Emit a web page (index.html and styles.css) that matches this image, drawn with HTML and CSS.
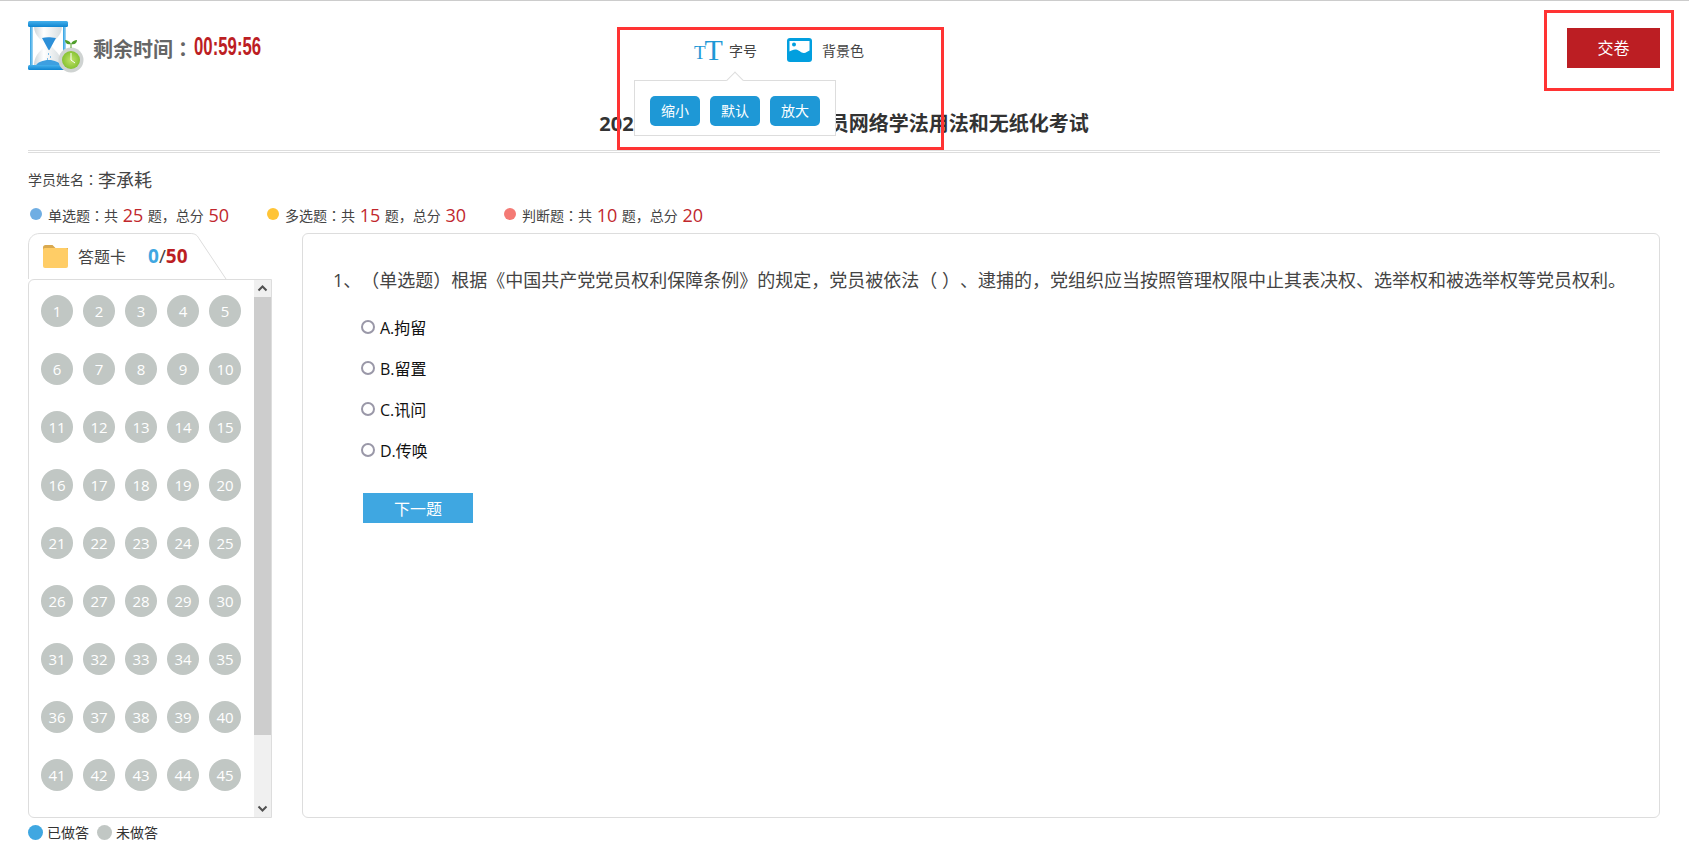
FILE: index.html
```html
<!DOCTYPE html>
<html lang="zh-CN">
<head>
<meta charset="utf-8">
<title>考试</title>
<link rel="stylesheet" href="styles.css">
</head>
<body>
<div class="page">
  <header class="topbar">
    <div class="timer">
      <svg class="hourglass" viewBox="0 0 56 54" width="56" height="54">
        <defs>
          <linearGradient id="glass" x1="0" x2="1" y1="0" y2="0"><stop offset="0" stop-color="#cfd6da"/><stop offset=".35" stop-color="#fff"/><stop offset="1" stop-color="#d5dcdf"/></linearGradient>
          <linearGradient id="pillar" x1="0" x2="1" y1="0" y2="0"><stop offset="0" stop-color="#2b9fe3"/><stop offset="1" stop-color="#a8daf5"/></linearGradient>
          <linearGradient id="rail" x1="0" x2="0" y1="0" y2="1"><stop offset="0" stop-color="#45b0ec"/><stop offset="1" stop-color="#0f85d0"/></linearGradient>
          <radialGradient id="clock" cx=".5" cy=".5" r=".5"><stop offset="0" stop-color="#c2e36a"/><stop offset="1" stop-color="#86c233"/></radialGradient>
        </defs>
        <rect x="2" y="4" width="3" height="43" fill="url(#pillar)"/>
        <rect x="35" y="4" width="3" height="43" fill="url(#pillar)"/>
        <path d="M6 6h28c0 11-9 14-11 19 2 5 11 8 11 21H6c0-13 9-16 11-21C15 20 6 17 6 6z" fill="url(#glass)"/>
        <path d="M14 18c4-1 8-1 14 0l-6 11c-.5 1.500-1.500 1.500-2 0z" fill="#2c8fd8"/>
        <path d="M20 33h1v2h-1zm2 3h1v2h-1zm-3 2h1v2h-1zm2 3h1v2h-1z" fill="#7fbde8"/>
        <path d="M7 47c2-5 8-7 14-7 5 0 11 2 13 7z" fill="#3d9fe0"/>
        <rect x="0" y="1" width="40" height="6" rx="1.500" fill="url(#rail)"/>
        <rect x="0" y="45" width="40" height="5" rx="1.500" fill="url(#rail)"/>
        <circle cx="43" cy="40" r="12.500" fill="#cfd3d2"/>
        <circle cx="43" cy="40" r="9" fill="url(#clock)"/>
        <path d="M43 33v7l4 3" stroke="#fff" stroke-width="1" fill="none"/>
        <path d="M43 28v-4" stroke="#5aa32c" stroke-width="1"/>
        <path d="M43 24c-1-3-4-4-6-4 0 3 2 5 6 4zm0 0c1-3 4-4 6-4 0 3-2 5-6 4z" fill="#4f9d2a"/>
      </svg>
      <span class="timer-label">剩余时间<span lang="zh-TW">：</span></span><span class="timer-value">00:59:56</span>
    </div>
    <div class="tools">
      <div class="tool tool-size">
        <span class="tt" aria-hidden="true"><span class="tt-small">T</span><span class="tt-big">T</span></span>
        <span class="tool-text">字号</span>
        <div class="popover">
          <span class="caret"></span>
          <button class="size-btn">缩小</button>
          <button class="size-btn">默认</button>
          <button class="size-btn">放大</button>
        </div>
      </div>
      <div class="tool">
        <svg class="pic" viewBox="0 0 25 24" width="25" height="24">
          <rect width="25" height="24" rx="3" fill="#029fdf"/>
          <path d="M2.500 3h20v9.500c-2 .6-3.500 2.400-5.500 2.500-3 .2-5-3.200-8-3.500-2.500-.3-4.500.8-6.500 2z" fill="#fff"/>
          <circle cx="7" cy="6.500" r="2" fill="#029fdf"/>
        </svg>
        <span class="tool-text">背景色</span>
      </div>
    </div>
    <button class="submit">交卷</button>
  </header>

  <h1 class="title"><span>202</span><span class="title-covered"></span><span>员网络学法用法和无纸化考试</span></h1>
  <div class="rule"></div>

  <div class="student"><span>学员姓名<span lang="zh-TW">：</span></span><span class="student-name">李承耗</span></div>

  <div class="stats">
    <div class="stat"><i class="dot dot-blue"></i><span>单选题<span lang="zh-TW">：</span>共 </span><b>25</b><span> 题，总分 </span><b>50</b></div>
    <div class="stat"><i class="dot dot-yellow"></i><span>多选题<span lang="zh-TW">：</span>共 </span><b>15</b><span> 题，总分 </span><b>30</b></div>
    <div class="stat"><i class="dot dot-red"></i><span>判断题<span lang="zh-TW">：</span>共 </span><b>10</b><span> 题，总分 </span><b>20</b></div>
  </div>

  <div class="columns">
    <aside class="card">
      <div class="tab">
        <svg class="tab-edge" viewBox="0 0 226 46" width="226" height="46"><path d="M.5 46V12C.5 5 5 .5 12 .5h150c5 0 7 1.500 9 5L198 46" fill="#fff" stroke="#ddd"/></svg>
        <svg class="folder" viewBox="0 0 25 23" width="25" height="23">
          <path d="M0 2.500C0 1 1 0 2.500 0h7l3 3H25v3H0z" fill="#d9a94f"/>
          <rect y="3" width="25" height="20" rx="2" fill="#ffcd66"/>
        </svg>
        <span class="tab-title">答题卡</span>
        <span class="tab-count"><b class="done">0</b>/<b class="total">50</b></span>
      </div>
      <div class="sheet">
        <div class="numbers">
          <span class="num">1</span><span class="num">2</span><span class="num">3</span><span class="num">4</span><span class="num">5</span>
          <span class="num">6</span><span class="num">7</span><span class="num">8</span><span class="num">9</span><span class="num">10</span>
          <span class="num">11</span><span class="num">12</span><span class="num">13</span><span class="num">14</span><span class="num">15</span>
          <span class="num">16</span><span class="num">17</span><span class="num">18</span><span class="num">19</span><span class="num">20</span>
          <span class="num">21</span><span class="num">22</span><span class="num">23</span><span class="num">24</span><span class="num">25</span>
          <span class="num">26</span><span class="num">27</span><span class="num">28</span><span class="num">29</span><span class="num">30</span>
          <span class="num">31</span><span class="num">32</span><span class="num">33</span><span class="num">34</span><span class="num">35</span>
          <span class="num">36</span><span class="num">37</span><span class="num">38</span><span class="num">39</span><span class="num">40</span>
          <span class="num">41</span><span class="num">42</span><span class="num">43</span><span class="num">44</span><span class="num">45</span>
          <span class="num"></span><span class="num"></span><span class="num"></span><span class="num"></span><span class="num"></span>
        </div>
        <div class="scrollbar">
          <svg class="arrow" viewBox="0 0 17 17" width="17" height="17"><path d="M4.500 10.500l4-4 4 4" fill="none" stroke="#505050" stroke-width="2"/></svg>
          <div class="track"><div class="thumb"></div></div>
          <svg class="arrow" viewBox="0 0 17 17" width="17" height="17"><path d="M4.500 6.500l4 4 4-4" fill="none" stroke="#505050" stroke-width="2"/></svg>
        </div>
      </div>
    </aside>

    <main class="question">
      <p class="stem">1、（单选题）根据《中国共产党党员权利保障条例》的规定，党员被依法（ ）、逮捕的，党组织应当按照管理权限中止其表决权、选举权和被选举权等党员权利。</p>
      <ul class="options">
        <li class="option"><i class="radio"></i>A.拘留</li>
        <li class="option"><i class="radio"></i>B.留置</li>
        <li class="option"><i class="radio"></i>C.讯问</li>
        <li class="option"><i class="radio"></i>D.传唤</li>
      </ul>
      <button class="next">下一题</button>
    </main>
  </div>

  <div class="legend">
    <i class="legend-dot legend-done"></i><span>已做答</span>
    <i class="legend-dot legend-todo"></i><span>未做答</span>
  </div>
</div>
<div class="mark mark-tools"></div>
<div class="mark mark-submit"></div>
</body>
</html>
```

FILE: styles.css
```css
* { box-sizing: border-box; }
html, body { margin: 0; padding: 0; background: #fff; }
body {
  font-family: "Open Sans", "Noto Sans CJK TC", sans-serif;
  text-spacing-trim: space-all;
  color: #333;
  border-top: 1px solid #ccc;
  height: 848px;
  overflow: hidden;
  position: relative;
}
.page { padding: 0 29px 0 28px; }

.topbar { display: flex; align-items: flex-start; height: 108px; }
.timer { display: flex; align-items: center; width: 666px; height: 54px; margin-top: 19px; }
.hourglass { flex: none; margin-right: 9px; }
.timer-label { font-size: 20px; font-weight: 700; color: #666; line-height: 54px; padding-top: 6px; }
.timer-value {
  font-family: "Liberation Sans", sans-serif;
  font-size: 26px; font-weight: 700; color: #bc1e23;
  display: inline-block; transform: scaleX(.645); transform-origin: left center;
  margin: 0 0 2px 1px; white-space: nowrap;
}
.tools { display: flex; gap: 30px; margin-top: 37px; }
.tool { display: flex; align-items: center; gap: 10px; height: 24px; position: relative; }
.tool-text { font-size: 14px; color: #444; }
.tt { display: flex; align-items: flex-end; width: 25px; height: 24px; font-family: "Liberation Serif", serif; color: #1e98d6; line-height: 1; }
.tt-small { font-size: 19px; margin-bottom: 0; }
.tt-big { font-size: 30px; margin-left: -1px; margin-bottom: -3px; }
.popover {
  position: absolute; left: -60px; top: 42px; width: 202px; height: 56px;
  background: #fff; border: 1px solid #ddd;
  display: flex; gap: 10px; padding: 15px 0 0 15px; z-index: 2;
}
.caret {
  position: absolute; left: 94px; top: -7px; width: 12px; height: 12px;
  background: #fff; border-left: 1px solid #ddd; border-top: 1px solid #ddd;
  transform: rotate(45deg);
}
.size-btn {
  width: 50px; height: 30px; border: 0; border-radius: 5px; padding: 0 0 2px;
  background: #1e98d6; color: #fff; font: 14px "Open Sans", "Noto Sans CJK TC", sans-serif;
}
.submit {
  margin: 27px 0 0 auto; width: 93px; height: 40px; border: 0; padding: 0 0 2px;
  background: #bc1e23; color: #fff; font: 16px "Open Sans", "Noto Sans CJK TC", sans-serif;
}

.title {
  display: flex; justify-content: center; margin: 0; height: 30px;
  font-size: 20px; line-height: 30px; font-weight: 700; color: #333; white-space: nowrap;
}
.title-covered { width: 195px; }
.rule { height: 3px; margin-top: 11px; border-top: 1px solid #ddd; border-bottom: 1px solid #ddd; }

.student { display: flex; align-items: center; margin-top: 14px; height: 26px; font-size: 14px; line-height: 26px; color: #444; }
.student-name { font-size: 18px; }

.stats { display: flex; margin-top: 10px; height: 24px; align-items: center; }
.stat { display: flex; align-items: center; font-size: 14px; color: #444; white-space: pre; width: 237px; padding-left: 2px; }
.stat b { font-weight: 400; font-size: 18px; color: #c1272d; margin: 0 1px; }
.dot { width: 12px; height: 12px; border-radius: 50%; margin-right: 6px; flex: none; margin-top: -3px; }
.dot-blue { background: #70aee3; }
.dot-yellow { background: #ffc436; }
.dot-red { background: #f47a75; }

.columns { display: flex; margin-top: 6px; height: 585px; }
.card { width: 244px; margin-right: 30px; flex: none; display: flex; flex-direction: column; }
.tab { position: relative; height: 46px; flex: none; display: flex; align-items: center; padding-left: 15px; }
.tab-edge { position: absolute; left: 0; top: 0; }
.folder { position: relative; flex: none; margin-right: 10px; }
.tab-title { position: relative; font-size: 16px; color: #444; width: 70px; }
.tab-count { position: relative; font-size: 19px; color: #444; }
.tab-count b { font-weight: 700; }
.done { color: #3fa7e1; }
.total { color: #bc1e23; }

.sheet {
  flex: 1; min-height: 0; position: relative; display: flex; overflow: hidden;
  background: #fff; border: 1px solid #ddd; border-radius: 6px 0 0 6px;
}
.numbers {
  flex: 1; padding: 15px 0 0 12px; display: grid;
  grid-template-columns: repeat(5, 32px); grid-auto-rows: 32px;
  column-gap: 10px; row-gap: 26px; align-content: start; overflow: hidden;
}
.num {
  width: 32px; height: 32px; border-radius: 50%; background: #c1c7c4;
  color: #fff; font-size: 15px; line-height: 32px; text-align: center;
}
.scrollbar { width: 17px; flex: none; display: flex; flex-direction: column; background: #f0f0f0; }
.arrow { flex: none; display: block; }
.track { flex: 1; }
.thumb { height: 438px; background: #cdcdcd; }

.question {
  flex: 1; min-width: 0; border: 1px solid #ddd; border-radius: 6px;
  padding: 33px 0 0 30px; background: #fff;
}
.stem { margin: 0; font-size: 18px; line-height: 26px; color: #444; white-space: nowrap; }
.options { list-style: none; margin: 13px 0 0 28px; padding: 0; }
.option { display: flex; align-items: center; height: 41px; font-size: 16px; color: #111; }
.radio { width: 14px; height: 14px; border-radius: 50%; border: 2px solid #9a98a8; margin: 1px 5px 0 0; flex: none; }
.next {
  display: block; margin: 23px 0 0 30px; width: 110px; height: 30px; border: 0; padding: 0;
  background: #3fa7e1; color: #fff; font: 16px "Open Sans", "Noto Sans CJK TC", sans-serif;
}

.legend { display: flex; align-items: center; height: 24px; margin-top: 2px; font-size: 14px; color: #333; }
.legend-dot { width: 15px; height: 15px; border-radius: 50%; margin-right: 4px; flex: none; }
.legend-done { background: #3fa7e1; }
.legend-todo { background: #c1c7c4; margin-left: 8px; }

.mark { position: absolute; border: 3px solid #f33; z-index: 5; pointer-events: none; }
.mark-tools { left: 617px; top: 26px; width: 327px; height: 123px; }
.mark-submit { left: 1544px; top: 9px; width: 130px; height: 81px; }
```
